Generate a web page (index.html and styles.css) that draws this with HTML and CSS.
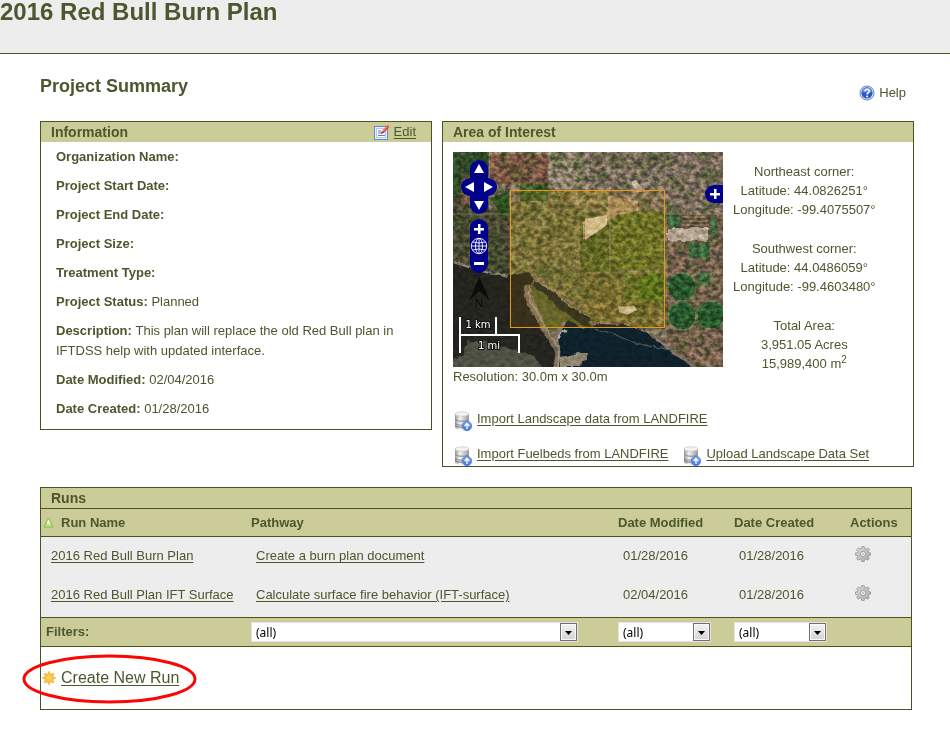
FILE: index.html
```html
<!DOCTYPE html>
<html lang="en">
<head>
<meta charset="utf-8">
<title>2016 Red Bull Burn Plan</title>
<link rel="stylesheet" href="styles.css">
</head>
<body>
<svg class="defs" aria-hidden="true">
  <defs>
    <linearGradient id="metal" x1="0" x2="1" y1="0" y2="0">
      <stop offset="0" stop-color="#96969c"/><stop offset=".35" stop-color="#f4f4f6"/><stop offset="1" stop-color="#97979e"/>
    </linearGradient>
    <linearGradient id="blue" x1="0" x2="0" y1="0" y2="1">
      <stop offset="0" stop-color="#7fa9f5"/><stop offset="1" stop-color="#3f74e0"/>
    </linearGradient>
    <linearGradient id="gearfill" x1="0" x2="1" y1="0" y2="1">
      <stop offset="0" stop-color="#dcdcdc"/><stop offset="1" stop-color="#a8a8a8"/>
    </linearGradient>
    <linearGradient id="button" x1="0" x2="0" y1="0" y2="1">
      <stop offset="0" stop-color="#f4f4f4"/><stop offset="1" stop-color="#d2d2d2"/>
    </linearGradient>
    <radialGradient id="sun">
      <stop offset="0" stop-color="#ffe066"/><stop offset="1" stop-color="#f6a21c"/>
    </radialGradient>
    <symbol id="database" viewBox="0 0 20 20">
      <path d="M2 13v3c0 1.600 3 2.500 7 2.500s7-.9 7-2.500v-3z" fill="url(#metal)"/>
      <path d="M2 14c1 1.800 4 2.200 7 2.200s6-.4 7-2.200" fill="none" stroke="#707077"/>
      <path d="M2 9v3.500c0 1.500 3 2.300 7 2.300s7-.8 7-2.300V9z" fill="url(#metal)"/>
      <path d="M2 12c1 1.800 4 2.200 7 2.200s6-.4 7-2.200" fill="none" stroke="#85858b"/>
      <path d="M2 3v5c0 1.500 3 2.300 7 2.300s7-.8 7-2.300V3z" fill="url(#metal)"/>
      <path d="M2 8c1 1.800 4 2.200 7 2.200s6-.4 7-2.200" fill="none" stroke="#85858b"/>
      <ellipse cx="9" cy="3" rx="7" ry="2.200" fill="#f3f3f5" stroke="#c6c6cb" stroke-width=".7"/>
      <circle cx="14" cy="15" r="4.700" fill="url(#blue)" stroke="#4a79dc" stroke-width=".8"/>
      <path d="M14 18v-5M11.700 15L14 12.500l2.300 2.500" fill="none" stroke="#fff" stroke-width="1.300"/>
    </symbol>
    <symbol id="gear" viewBox="-8 -8 16 16">
      <g fill="url(#gearfill)" stroke="#8c8c8c" stroke-width=".7">
        <path d="M-1.200-7.500h2.400l.5 2.100 1.100.5 1.900-1.200 1.700 1.700-1.200 1.900.5 1.100 1.800.3v2.400l-1.800.3-.5 1.100 1.200 1.800-1.700 1.700-1.900-1.200-1.100.5-.5 2H-1.200l-.5-2-1.100-.5-1.900 1.200-1.700-1.700 1.200-1.800-.5-1.100-1.800-.3v-2.400l1.800-.3.5-1.100-1.200-1.900 1.700-1.700 1.900 1.200 1.100-.5z"/>
        <circle r="2.600" fill="#ededed"/>
      </g>
      <circle r="1.100" fill="#bbb"/>
    </symbol>
    <symbol id="drop" viewBox="0 0 17 18">
      <rect x=".5" y=".5" width="16" height="17" fill="url(#button)" stroke="#707070"/>
      <rect x="1.500" y="1.500" width="14" height="15" fill="none" stroke="#fafafa"/>
      <path d="M5 8h7L8.500 12z" fill="#000"/>
    </symbol>
  </defs>
</svg>

<header class="banner"><h1>2016 Red Bull Burn Plan</h1></header>

<main>
  <div class="heading">
    <h2>Project Summary</h2>
    <a class="help" href="#help">
      <svg width="16" height="16" viewBox="0 0 16 16" aria-hidden="true">
        <circle cx="8" cy="8" r="7" fill="#dce7fb" stroke="#6c85bd"/>
        <circle cx="8" cy="8" r="5.600" fill="#2859c4"/>
        <path d="M3 7a5 5 0 0 1 10 0c-3 1-7 1-10 0z" fill="#5e8ae2"/>
        <path d="M5.900 6.300c0-2.700 4.300-2.600 4.300 0 0 1.500-2.100 1.500-2.100 3.100" fill="none" stroke="#fff" stroke-width="1.600"/>
        <circle cx="8.100" cy="11.600" r="1" fill="#fff"/>
      </svg>
      Help
    </a>
  </div>

  <div class="panels">
    <section class="panel">
      <div class="panel-title">
        <h3>Information</h3>
        <a class="edit" href="#edit">
          <svg width="16" height="16" viewBox="0 0 16 16" aria-hidden="true">
            <rect x=".5" y="2.500" width="13" height="13" fill="#e9f1ff" stroke="#6486cf"/>
            <rect x="2.500" y="4.500" width="9" height="9" fill="#fff" stroke="#b4c8ee"/>
            <path d="M4 7h3M4 9h3M4 11.500h7" stroke="#5779d0"/>
            <path d="M7 9.800l1-2.700L13.500 1 15.500 2.800 9.800 9z" fill="#e8432c"/>
            <path d="M8.500 7.500L14 1.700" stroke="#ff9a80"/>
            <path d="M7 9.800l.8-2.300 1.600 1.500z" fill="#6b4430"/>
          </svg>
          <span>Edit</span>
        </a>
      </div>
      <dl class="facts">
        <div><dt>Organization Name:</dt></div>
        <div><dt>Project Start Date:</dt></div>
        <div><dt>Project End Date:</dt></div>
        <div><dt>Project Size:</dt></div>
        <div><dt>Treatment Type:</dt></div>
        <div><dt>Project Status:</dt> <dd>Planned</dd></div>
        <div><dt>Description:</dt> <dd>This plan will replace the old Red Bull plan in IFTDSS help with updated interface.</dd></div>
        <div><dt>Date Modified:</dt> <dd>02/04/2016</dd></div>
        <div><dt>Date Created:</dt> <dd>01/28/2016</dd></div>
      </dl>
    </section>

    <section class="panel area">
      <div class="panel-title"><h3>Area of Interest</h3></div>
      <div class="area-body">
        <div class="area-top">
          <div>
            <div class="map">
              <svg class="imagery" viewBox="0 0 270 215" role="img" aria-label="Satellite map">
                <defs>
                  <filter id="fine" x="0" y="0" width="100%" height="100%" color-interpolation-filters="sRGB">
                    <feTurbulence type="fractalNoise" baseFrequency=".19 .23" numOctaves="4" seed="7"/>
                    <feColorMatrix values="2.400 0 0 0 -.7  2 .4 0 0 -.7  2 0 .4 0 -.7  0 0 0 0 1"/>
                  </filter>
                  <filter id="patches" x="0" y="0" width="100%" height="100%" color-interpolation-filters="sRGB">
                    <feTurbulence type="fractalNoise" baseFrequency=".06" numOctaves="4" seed="21"/>
                    <feColorMatrix values="0 0 0 0 .2  0 0 0 0 .29  0 0 0 0 .12  5 0 0 0 -2.200"/>
                  </filter>
                  <filter id="rough" x="-5%" y="-5%" width="110%" height="110%" color-interpolation-filters="sRGB">
                    <feTurbulence type="fractalNoise" baseFrequency=".15" numOctaves="2" seed="3"/>
                    <feDisplacementMap in="SourceGraphic" scale="5" xChannelSelector="R" yChannelSelector="G"/>
                  </filter>
                  <clipPath id="land"><path d="M0 0h270v215h-25l-30-20-25-17-25-6-25 0-8-12-52-36-28 0-12 6-50-18z"/></clipPath>
                </defs>
                <rect width="270" height="215" fill="#7f6f60"/>
                <path d="M0 0h36v58h22v70L0 110z" fill="#4a4834"/>
                <path d="M0 0h8v43H0zM10 0h26v17l-14 6H10z" fill="#2f4a28"/>
                <path d="M8 28l12-5 15 12v18H8z" fill="#73523f"/>
                <path d="M37 2h58v30H37z" fill="#7c5745"/>
                <path d="M38 46l18-6v27l-9-5z" fill="#2c4f20"/>
                <path d="M67 32h28v17H67z" fill="#415d2b"/>
                <path d="M57 50h100v72l-24 38-50-35-26 3z" fill="#736f43"/>
                <path d="M96 0h40v37H96z" fill="#8e806b"/>
                <path d="M96 38h60v15H96z" fill="#8a7d52"/>
                <path d="M127 68h29v54h-29z" fill="#59652b"/>
                <path d="M133 120h80v57l-48-5-25-1-10-14z" fill="#756b3a"/>
                <path d="M213 62h57v153h-27l-30-24z" fill="#77614e"/>
                <g clip-path="url(#land)"><rect width="270" height="215" filter="url(#patches)" opacity=".4"/></g>
                <path d="M157 66l20-7h35v60h-55z" fill="#5f6b2a"/>
                <path d="M155 44l30 5v10l-27 5-6 7-22 17v-18l15-5h9z" fill="#a38a62"/>
                <path d="M132 67l22-4v10l-22 15z" fill="#d0be98"/>
                <path d="M178 30l5-2 6 8v4h-5z" fill="#c3b3a0"/>
                <path d="M170 122h42v28h-42z" fill="#5a6a2a"/>
                <circle cx="199" cy="134" r="14" fill="#4c6a1d"/>
                <path d="M165 154l7 1 9-2 3 5-10 5-8-3z" fill="#c3b490"/>
                <g fill="#28552a" stroke="#6f7c55" stroke-width=".8">
                  <circle cx="229" cy="135" r="14"/><circle cx="229" cy="164" r="14"/><circle cx="258" cy="163" r="14"/>
                </g>
                <path d="M244 120h14v14h-14z" fill="#45673c"/>
                <path d="M214 63h50v13h-50z" fill="#62513c"/>
                <path d="M215 63h12v12h-12zM258 66h5v18h-5zM236 91h21v15h-21z" fill="#386238"/>
                <path d="M229 65h27M229 69h27M229 73h27" stroke="#a18969"/>
                <path d="M214 76h41v13h-41z" fill="#b6a694" filter="url(#rough)"/>
                <rect width="270" height="215" filter="url(#fine)" clip-path="url(#land)" class="grain strong"/>
                <path d="M0 62h56M36 0v58M57 127V38M97 0v36M157 53v69M132 121h138M213 0v190M171 122v28M213 89h57M213 62h57M258 89v45M213 149h57M126 50v72" fill="none" stroke="#a1957b" stroke-width=".8" opacity=".55"/>
                <g filter="url(#rough)">
                  <path d="M-4 109l32 10 26 6 7-2 14-3 6 7-5 7 3 18 14 26 12 20 1 20H-4z" fill="#24241e"/>
                  <path d="M103 219l4-35 8-18 14 10 18-4 25 1 20 7 20 16 33 23z" fill="#0e212b"/>
                  <path d="M79 128l54 33 7 13-12 3-12-9-12 8-8 6-20-46z" fill="#5a602f"/>
                  <path d="M82 129l15 8 18 16 21 12 2 12-10-5-20-14-16-15-13-9z" fill="#282b23"/>
                  <path d="M0 110l28 9 27 6" fill="none" stroke="#898176" stroke-width="2"/>
                  <path d="M82 129l14 7 20 17 20 12" fill="none" stroke="#9b8e68"/>
                  <path d="M-4 219v-11l14-4 5-15 17 1 17 5 32 8 10 16z" fill="#4f5042"/>
                  <path d="M73 133l3 18 17 28 12 21-2 18" fill="none" stroke="#796d56" stroke-width="5"/>
                  <path d="M76 133l2 18 16 27 12 20-1 20" fill="none" stroke="#a19479" stroke-width="1.500"/>
                  <path d="M106 205l15-2 3-3h10v8l-6 1-1 6h-20z" fill="#8d846f"/>
                  <path d="M104 188l7-10 3 2" fill="none" stroke="#afac9c" stroke-width="2"/>
                  <path d="M141 177l20 5 15 7 20 5 18 3" fill="none" stroke="#43534f" stroke-width="1.500"/>
                </g>
                <rect width="270" height="215" filter="url(#fine)" class="grain"/>
                <rect x="57.500" y="38.500" width="154" height="137" fill="#e90" fill-opacity=".1" stroke="#e8971a"/>
                <path d="M26.500 125l10 23-10-9-10 9z" fill="#0b0b0b"/>
                <text x="26" y="155" class="north">N</text>
                <path d="M7 165v36M43 165v17M6 183h61M66 182v19" fill="none" stroke="#fff" stroke-width="2"/>
                <text x="25" y="176" class="scale">1 km</text>
                <text x="36" y="197" class="scale">1 mi</text>
              </svg>
              <button class="ctl up" aria-label="Pan up"><svg viewBox="0 0 18 18"><path d="M9 4l5 9H4z"/></svg></button>
              <button class="ctl left" aria-label="Pan left"><svg viewBox="0 0 18 18"><path d="M4 9l9-5v10z"/></svg></button>
              <button class="ctl right" aria-label="Pan right"><svg viewBox="0 0 18 18"><path d="M14 9L5 4v10z"/></svg></button>
              <button class="ctl down" aria-label="Pan down"><svg viewBox="0 0 18 18"><path d="M9 14L4 5h10z"/></svg></button>
              <button class="ctl in" aria-label="Zoom in"><svg viewBox="0 0 18 18"><path d="M8 5h2.500v4H14v2.500h-3.500V15H8v-3.500H4V9h4z"/></svg></button>
              <button class="ctl world" aria-label="Zoom to full extent"><svg viewBox="0 0 18 18"><g fill="none" stroke="#fff" stroke-width=".9"><circle cx="9" cy="9" r="7.700"/><ellipse cx="9" cy="9" rx="3.500" ry="7.700"/><path d="M9 1v16M1 9h16M2.500 5q6.500 2 13 0M2.500 13q6.500-2 13 0"/></g></svg></button>
              <button class="ctl out" aria-label="Zoom out"><svg viewBox="0 0 18 18"><path d="M4 7h10v3H4z"/></svg></button>
              <button class="ctl layers" aria-label="Show layers"><svg viewBox="0 0 18 18"><path d="M9 4h2.500v4H15v2.500h-3.500V14H9v-3.500H5V8h4z"/></svg></button>
            </div>
            <p class="resolution">Resolution: 30.0m x 30.0m</p>
          </div>
          <div class="corners">
            <p>Northeast corner:<br>Latitude: 44.0826251°<br>Longitude: -99.4075507°</p>
            <p>Southwest corner:<br>Latitude: 44.0486059°<br>Longitude: -99.4603480°</p>
            <p>Total Area:<br>3,951.05 Acres<br>15,989,400 m<sup>2</sup></p>
          </div>
        </div>
        <div class="imports">
          <a href="#landscape"><svg width="20" height="20" aria-hidden="true"><use href="#database"/></svg><span>Import Landscape data from LANDFIRE</span></a>
        </div>
        <div class="imports">
          <a href="#fuelbeds"><svg width="20" height="20" aria-hidden="true"><use href="#database"/></svg><span>Import Fuelbeds from LANDFIRE</span></a>
          <a href="#upload"><svg width="20" height="20" aria-hidden="true"><use href="#database"/></svg><span>Upload Landscape Data Set</span></a>
        </div>
      </div>
    </section>
  </div>

  <section class="panel runs">
    <div class="panel-title"><h3>Runs</h3></div>
    <table>
      <colgroup><col class="c-name"><col><col class="c-date"><col class="c-date"><col class="c-act"></colgroup>
      <thead>
        <tr>
          <th scope="col"><span class="sorted"><svg width="11" height="11" viewBox="0 0 11 11" aria-hidden="true"><path d="M5.500 1L10 10H1z" fill="#c5e86c" stroke="#8fae6a" stroke-linejoin="round"/><path d="M5.500 2.500L7.500 6.500h-4z" fill="#f2fbd8"/></svg>Run Name</span></th>
          <th scope="col">Pathway</th><th scope="col">Date Modified</th><th scope="col">Date Created</th><th scope="col">Actions</th>
        </tr>
      </thead>
      <tbody>
        <tr>
          <td class="name"><a href="#run1">2016 Red Bull Burn Plan</a></td>
          <td><a href="#path1">Create a burn plan document</a></td>
          <td>01/28/2016</td><td>01/28/2016</td>
          <td><button class="gear" aria-label="Actions for 2016 Red Bull Burn Plan"><svg width="16" height="16"><use href="#gear"/></svg></button></td>
        </tr>
        <tr>
          <td class="name"><a href="#run2">2016 Red Bull Plan IFT Surface</a></td>
          <td><a href="#path2">Calculate surface fire behavior (IFT-surface)</a></td>
          <td>02/04/2016</td><td>01/28/2016</td>
          <td><button class="gear" aria-label="Actions for 2016 Red Bull Plan IFT Surface"><svg width="16" height="16"><use href="#gear"/></svg></button></td>
        </tr>
      </tbody>
      <tfoot>
        <tr>
          <th scope="row">Filters:</th>
          <td><span class="filter wide"><select aria-label="Filter by pathway"><option>(all)</option></select><svg width="17" height="18" aria-hidden="true"><use href="#drop"/></svg></span></td>
          <td><span class="filter"><select aria-label="Filter by date modified"><option>(all)</option></select><svg width="17" height="18" aria-hidden="true"><use href="#drop"/></svg></span></td>
          <td><span class="filter"><select aria-label="Filter by date created"><option>(all)</option></select><svg width="17" height="18" aria-hidden="true"><use href="#drop"/></svg></span></td>
          <td></td>
        </tr>
      </tfoot>
    </table>
    <div class="create">
      <a href="#new">
        <svg width="16" height="16" viewBox="-8 -8 16 16" aria-hidden="true"><path d="M0-7l1.500 3.200L5-5 3.900-1.500 7 0 3.900 1.500 5 5 1.500 3.900 0 7l-1.500-3.100L-5 5l1.100-3.500L-7 0l3.100-1.500L-5-5l3.500 1.200z" fill="url(#sun)" stroke="#f3b755" stroke-width=".6"/></svg>
        <span>Create New Run</span>
      </a>
      <svg class="ring" viewBox="0 0 175 50" aria-hidden="true"><ellipse cx="87.500" cy="25" rx="85.500" ry="23" fill="none" stroke="#fb0505" stroke-width="3"/></svg>
    </div>
  </section>
</main>
</body>
</html>
```

FILE: styles.css
```css
:root {
  --ink: #4b572e;
  --line: #475523;
  --khaki: #cccc99;
  --pale: #ededed;
}

* { box-sizing: border-box; }

body {
  margin: 0;
  background: #fff;
  color: var(--ink);
  font: 13px/20px "Liberation Sans", Arial, sans-serif;
}

h1, h2, h3, p, dl, dd { margin: 0; }
a { color: inherit; }
svg { display: block; flex: none; }
.defs { position: absolute; width: 0; height: 0; }

.banner {
  height: 54px;
  background: var(--pale);
  border-bottom: 1px solid var(--line);
}
h1 { font-size: 24px; line-height: 24px; }

main { padding: 20px 36px 40px 40px; }

.heading {
  display: flex;
  justify-content: space-between;
  align-items: flex-end;
  padding-right: 8px;
  margin-bottom: 18px;
}
h2 { font-size: 18px; line-height: 24px; padding-bottom: 5px; }
.help { display: flex; align-items: center; gap: 4px; text-decoration: none; }

.panels {
  display: grid;
  grid-template-columns: 392fr 472fr;
  gap: 10px;
  align-items: start;
}
.panel { border: 1px solid var(--line); }
.panel-title {
  display: flex;
  justify-content: space-between;
  align-items: center;
  height: 20px;
  padding: 0 15px 0 10px;
  background: var(--khaki);
}
h3 { font-size: 14px; line-height: 20px; }
.edit { display: flex; align-items: center; gap: 4px; text-decoration: none; }
.edit span, .imports span, .create span { text-decoration: underline; text-underline-offset: 2px; }

.facts { padding: 5px 30px 10px 15px; }
.facts div + div { margin-top: 9px; }
dt { display: inline; font-weight: bold; }
dd { display: inline; }

.area-body { padding: 10px 10px 0; }
.area-top { display: flex; gap: 10px; }
.map { position: relative; width: 270px; }
.imagery { width: 100%; height: auto; }
.grain { mix-blend-mode: overlay; opacity: .15; }
.grain.strong { opacity: .25; }
.north { font: 11px "Liberation Sans", sans-serif; fill: #0b0b0b; text-anchor: middle; }
.scale {
  font: 10px "DejaVu Sans", sans-serif;
  fill: #fff;
  stroke: #111;
  stroke-width: 2px;
  paint-order: stroke;
  text-anchor: middle;
}

.ctl {
  position: absolute;
  width: 18px;
  height: 18px;
  padding: 0;
  border: 0;
  background: #00008b;
}
.ctl svg { fill: #fff; }
.up { left: 17px; top: 8px; border-radius: 9px 9px 0 0; }
.left { left: 8px; top: 26px; border-radius: 9px 0 0 9px; }
.right { left: 26px; top: 26px; border-radius: 0 9px 9px 0; }
.down { left: 17px; top: 44px; border-radius: 0 0 9px 9px; }
.in { left: 17px; top: 67px; border-radius: 9px 9px 0 0; }
.world { left: 17px; top: 85px; }
.out { left: 17px; top: 103px; border-radius: 0 0 9px 9px; }
.layers { right: 0; top: 33px; border-radius: 9px 0 0 9px; }

.corners { padding-top: 10px; text-align: center; line-height: 19px; }
.corners p + p { margin-top: 20px; }
sup { font-size: 10px; line-height: 0; }

.imports { display: flex; gap: 14px; margin-top: 13px; }
.area-top + .imports { margin-top: 22px; }
.imports a { display: flex; gap: 4px; text-decoration: none; }
.imports svg { margin-top: 2px; }

.runs { margin: 20px 2px 0 0; }
table { width: 100%; table-layout: fixed; border-collapse: collapse; border-top: 1px solid var(--line); }
.c-name { width: 210px; }
.c-date { width: 116px; }
.c-act { width: 61px; }
th, td { padding: 0; text-align: left; }
thead th { height: 28px; background: var(--khaki); border-bottom: 1px solid var(--line); }
.sorted { display: flex; align-items: center; gap: 7px; padding-left: 2px; }
tbody { background: var(--pale); }
tbody td { height: 39px; padding-left: 5px; }
tbody tr:last-child td { height: 42px; padding-bottom: 3px; }
tbody td.name { padding-left: 10px; }
tbody a { text-underline-offset: 2px; }
.gear { display: block; padding: 0 0 4px; border: 0; background: none; }
tfoot { background: var(--khaki); border: solid var(--line); border-width: 1px 0; }
tfoot th, tfoot td { height: 29px; }
tfoot th { padding-left: 5px; }
.filter { display: flex; position: relative; width: 93px; }
.filter.wide { width: 89%; }
.filter select {
  width: 100%;
  height: 20px;
  padding: 0 20px 0 4px;
  border: 1px solid #e2e3ea;
  border-radius: 0;
  background: #fff;
  color: #000;
  font: 12px "Noto Sans", sans-serif;
  appearance: none;
}
.filter svg { position: absolute; top: 1px; right: 1px; pointer-events: none; }

.create { position: relative; padding: 20px 0 17px; font-size: 16px; line-height: 22px; }
.create a { display: inline-flex; align-items: center; gap: 4px; text-decoration: none; }
.ring { position: absolute; left: -19px; top: 7px; width: 175px; pointer-events: none; }
```
